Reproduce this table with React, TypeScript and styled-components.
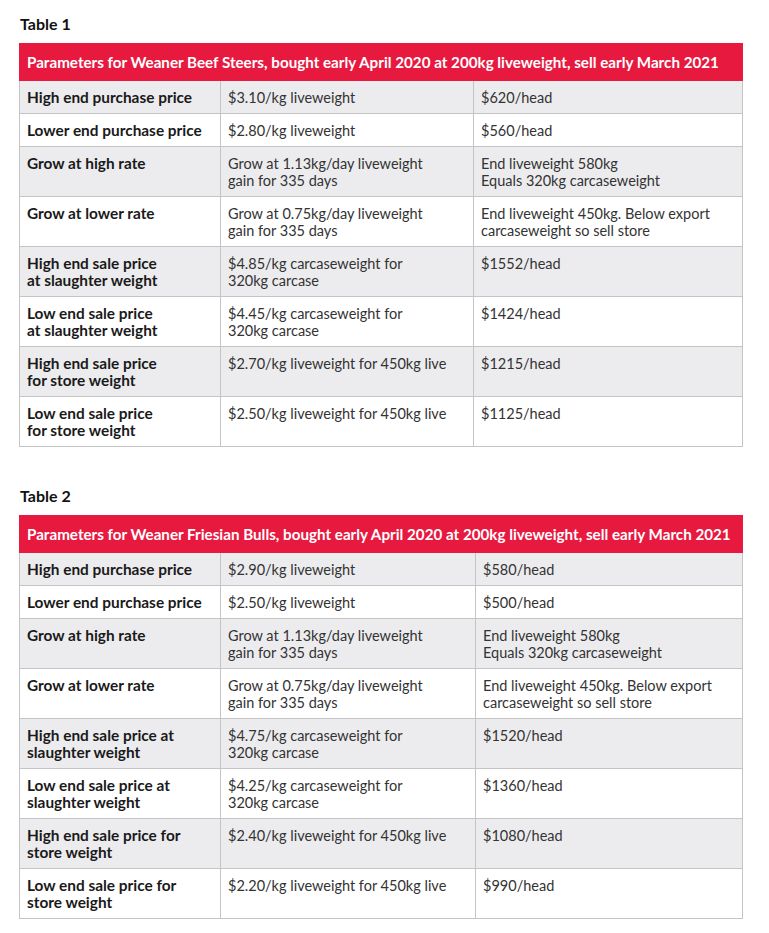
import React from "react";
import styled, { createGlobalStyle } from "styled-components";

const Global = createGlobalStyle`
  html, body { margin: 0; padding: 0; background: #ffffff; }
  body { font-family: "Lato", "Open Sans", sans-serif; color: #222; }
`;

const Page = styled.div`
  padding: 13px 0 0 19px;
  width: 723px;
`;

const Section = styled.section`
  margin-bottom: 38px;
`;

const Heading = styled.h2`
  margin: 0 0 9px 1px;
  font-size: 16px;
  line-height: 21px;
  font-weight: 700;
  color: #111;
`;

const Table = styled.table`
  width: 723px;
  border-collapse: collapse;
  table-layout: fixed;
  font-size: 14.5px;
`;

const HeadCell = styled.th`
  background: #e8193f;
  color: #fff;
  text-align: left;
  font-weight: 700;
  font-size: 15.2px;
  line-height: 17px;
  padding: 10px 7px 9px 7px;
  border: 1px solid #e8193f;
  white-space: nowrap;
`;

const Row = styled.tr<{ $shade: boolean }>`
  background: ${(p) => (p.$shade ? "#ececee" : "#ffffff")};
`;

const Cell = styled.td<{ $bold?: boolean }>`
  border: 1px solid #c4c4c4;
  padding: 8px 7px 7px 7px;
  vertical-align: top;
  line-height: 17px;
  font-size: ${(p) => (p.$bold ? "15.4px" : "14.5px")};
  font-weight: ${(p) => (p.$bold ? 700 : 400)};
  color: ${(p) => (p.$bold ? "#1a1a1a" : "#333")};
`;

type RowData = [string, string, string];

const Lines = ({ text }: { text: string }) => (
  <>
    {text.split("\n").map((l, i, a) => (
      <React.Fragment key={i}>
        {l}
        {i < a.length - 1 && <br />}
      </React.Fragment>
    ))}
  </>
);

const DataTable = ({
  title,
  caption,
  rows,
  cols,
}: {
  title: string;
  caption: string;
  rows: RowData[];
  cols: number[];
}) => (
  <Section>
    <Heading>{title}</Heading>
    <Table>
      <colgroup>
        {cols.map((w, i) => (
          <col key={i} style={{ width: w }} />
        ))}
      </colgroup>
      <thead>
        <tr>
          <HeadCell colSpan={3}>{caption}</HeadCell>
        </tr>
      </thead>
      <tbody>
        {rows.map((r, i) => (
          <Row key={i} $shade={i % 2 === 0}>
            <Cell $bold>
              <Lines text={r[0]} />
            </Cell>
            <Cell>
              <Lines text={r[1]} />
            </Cell>
            <Cell>
              <Lines text={r[2]} />
            </Cell>
          </Row>
        ))}
      </tbody>
    </Table>
  </Section>
);

const table1: RowData[] = [
  ["High end purchase price", "$3.10/kg liveweight", "$620/head"],
  ["Lower end purchase price", "$2.80/kg liveweight", "$560/head"],
  ["Grow at high rate", "Grow at 1.13kg/day liveweight\ngain for 335 days", "End liveweight 580kg\nEquals 320kg carcaseweight"],
  ["Grow at lower rate", "Grow at 0.75kg/day liveweight\ngain for 335 days", "End liveweight 450kg. Below export\ncarcaseweight so sell store"],
  ["High end sale price\nat slaughter weight", "$4.85/kg carcaseweight for\n320kg carcase", "$1552/head"],
  ["Low end sale price\nat slaughter weight", "$4.45/kg carcaseweight for\n320kg carcase", "$1424/head"],
  ["High end sale price\nfor store weight", "$2.70/kg liveweight for 450kg live", "$1215/head"],
  ["Low end sale price\nfor store weight", "$2.50/kg liveweight for 450kg live", "$1125/head"],
];

const table2: RowData[] = [
  ["High end purchase price", "$2.90/kg liveweight", "$580/head"],
  ["Lower end purchase price", "$2.50/kg liveweight", "$500/head"],
  ["Grow at high rate", "Grow at 1.13kg/day liveweight\ngain for 335 days", "End liveweight 580kg\nEquals 320kg carcaseweight"],
  ["Grow at lower rate", "Grow at 0.75kg/day liveweight\ngain for 335 days", "End liveweight 450kg. Below export\ncarcaseweight so sell store"],
  ["High end sale price at\nslaughter weight", "$4.75/kg carcaseweight for\n320kg carcase", "$1520/head"],
  ["Low end sale price at\nslaughter weight", "$4.25/kg carcaseweight for\n320kg carcase", "$1360/head"],
  ["High end sale price for\nstore weight", "$2.40/kg liveweight for 450kg live", "$1080/head"],
  ["Low end sale price for\nstore weight", "$2.20/kg liveweight for 450kg live", "$990/head"],
];

export default function App() {
  return (
    <>
      <Global />
      <Page>
        <DataTable
          title="Table 1"
          caption="Parameters for Weaner Beef Steers, bought early April 2020 at 200kg liveweight, sell early March 2021"
          rows={table1}
          cols={[201, 253, 269]}
        />
        <DataTable
          title="Table 2"
          caption="Parameters for Weaner Friesian Bulls, bought early April 2020 at 200kg liveweight, sell early March 2021"
          rows={table2}
          cols={[201, 255, 267]}
        />
      </Page>
    </>
  );
}
